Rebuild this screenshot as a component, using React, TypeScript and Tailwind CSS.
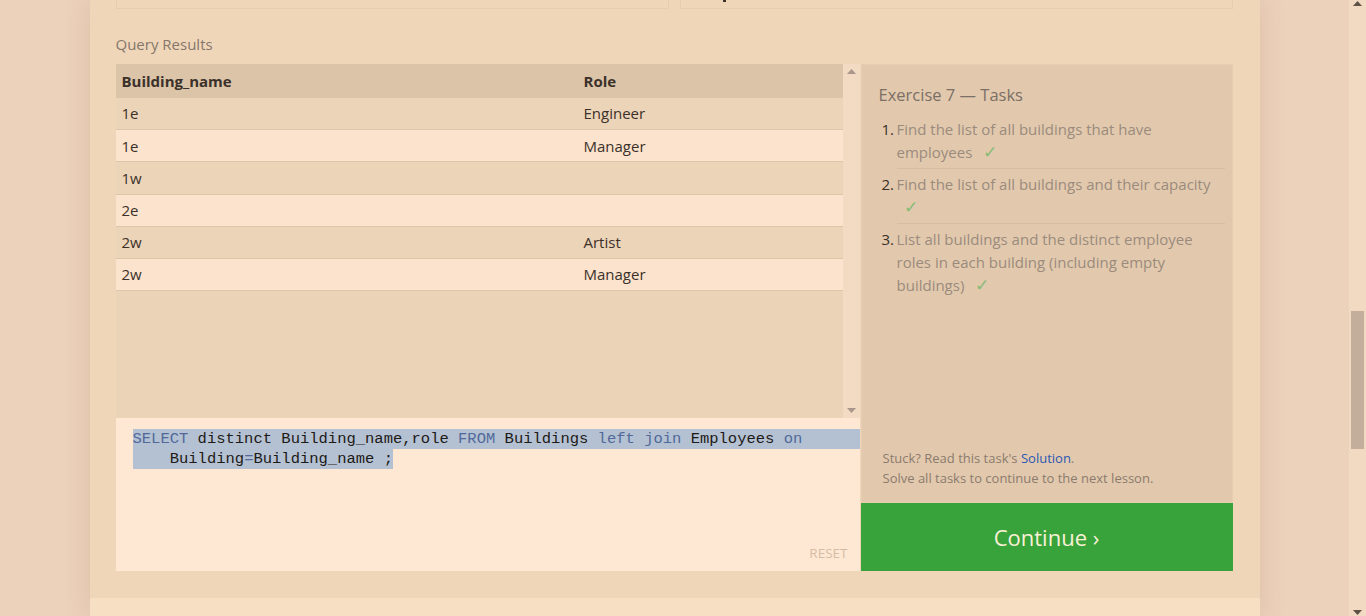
const rows = [
  { b: "1e", r: "Engineer" },
  { b: "1e", r: "Manager" },
  { b: "1w", r: "" },
  { b: "2e", r: "" },
  { b: "2w", r: "Artist" },
  { b: "2w", r: "Manager" },
];

const tasks = [
  "Find the list of all buildings that have employees",
  "Find the list of all buildings and their capacity",
  "List all buildings and the distinct employee roles in each building (including empty buildings)",
];

const sans = { fontFamily: '"Open Sans", "Noto Sans", sans-serif' };

function Check() {
  return <span className="ml-[7px] text-[17px] leading-[20px] text-[#86bb76]">✓</span>;
}

function Arrow({ down = false }: { down?: boolean }) {
  return (
    <svg width="9" height="5" viewBox="0 0 9 5" className={down ? "rotate-180" : ""}>
      <path d="M0 5 L4.5 0 L9 5 Z" fill="currentColor" />
    </svg>
  );
}

function ResultsTable() {
  return (
    <div className="flex h-[354px] bg-[#ebd3b7]">
      <div className="w-[727px]">
        <div className="flex h-[34px] items-center bg-[#dbc4a8] text-[15px] font-bold text-[#3b312a]">
          <div className="w-[468px] pl-[6px]">Building_name</div>
          <div>Role</div>
        </div>
        {rows.map((row, i) => (
          <div
            key={i}
            className={`flex h-[32.2px] items-center border-b border-[#dfc6ab] text-[15px] text-[#3b312a] ${
              i % 2 === 0 ? "bg-[#ecd4b8]" : "bg-[#fbe3cd]"
            }`}
          >
            <div className="w-[468px] pl-[6px]">{row.b}</div>
            <div>{row.r}</div>
          </div>
        ))}
      </div>
      <div className="flex w-[17px] flex-col items-center justify-between bg-[#f2dac3] py-[5px] text-[#a8968a]">
        <Arrow />
        <Arrow down />
      </div>
    </div>
  );
}

function Editor() {
  const kw = "text-[#51699a]";
  return (
    <div className="relative h-[153px] bg-[#ffe8d3] pt-[11px]" style={{ fontFamily: '"Liberation Mono", "DejaVu Sans Mono", monospace' }}>
      <div className="text-[15.5px] leading-[20px] text-[#1e1a16]">
        <div className="ml-[17px] bg-[#b4c1d3] whitespace-pre">
          <span className={kw}>SELECT</span> distinct Building_name,role <span className={kw}>FROM</span> Buildings{" "}
          <span className={kw}>left</span> <span className={kw}>join</span> Employees <span className={kw}>on</span>
        </div>
        <div className="ml-[17px] w-fit bg-[#b4c1d3] whitespace-pre">
          {"    Building"}
          <span className={kw}>=</span>
          {"Building_name ;"}
        </div>
      </div>
      <div className="absolute bottom-[8px] right-[12px] text-[13.5px] text-[#d3bda7]" style={sans}>
        RESET
      </div>
    </div>
  );
}

function TasksPanel() {
  return (
    <div className="flex h-[439px] flex-col border border-[#e7ceb2] bg-[#e2c9ad] pl-[17px] pr-[7px] pt-[18px] pb-[14px]">
      <div className="text-[16.5px] text-[#7b6f66]">Exercise 7 — Tasks</div>
      <ol className="mt-[10px] pl-[3px] text-[15px] leading-[23px] text-[#9b8b7d]">
        {tasks.map((t, i) => (
          <li key={i} className="flex">
            <span className="w-[15px] shrink-0 text-[#3a3028]">{i + 1}.</span>
            <span className={`flex-1 ${i < tasks.length - 1 ? "border-b border-[#d6bea3] pb-[4px] mb-[4px]" : ""}`}>
              {t} <Check />
            </span>
          </li>
        ))}
      </ol>
      <div className="mt-auto pl-[4px] text-[13px] leading-[20px] text-[#8b7b6d]">
        <div>
          Stuck? Read this task's <span className="text-[#2b58b3]">Solution</span>.
        </div>
        <div>Solve all tasks to continue to the next lesson.</div>
      </div>
    </div>
  );
}

export default function App() {
  return (
    <div className="flex h-[616px] w-[1366px] overflow-hidden bg-[#ecd1bb]" style={sans}>
      <div className="flex flex-1 justify-center">
        <div className="flex w-[1170px] flex-col bg-[#f0d6b9] shadow-[0_0_24px_rgba(150,110,70,0.18)]">
          <div className="flex h-[9px] gap-[11px] px-[26px] pr-[27px]">
            <div className="flex-1 border border-t-0 border-[#e6ccb0]"></div>
            <div className="relative flex-1 border border-t-0 border-[#e6ccb0]">
              <span className="absolute left-[42px] top-[0px] h-[2px] w-[3px] bg-[#3b312a]"></span>
            </div>
          </div>
          <div className="px-[26px] pt-[25px] pb-[10px] text-[15px] leading-[20px] text-[#85776b]">Query Results</div>
          <div className="flex px-[26px]">
            <div className="flex w-[744px] flex-col">
              <ResultsTable />
              <Editor />
            </div>
            <div className="ml-[1px] flex w-[372px] flex-col">
              <TasksPanel />
              <div className="flex h-[68px] items-center justify-center bg-[#38a33b] text-[22px] text-[#fbf1d8]">
                Continue ›
              </div>
            </div>
          </div>
          <div className="h-[27px]"></div>
          <div className="flex-1 bg-[#f7dfc4]"></div>
        </div>
      </div>
      <div className="flex w-[17px] flex-col items-center bg-[#f1d9c2]">
        <div className="pt-[1px] text-[#5e5147]">
          <Arrow />
        </div>
        <div className="mt-[305px] h-[138px] w-[13px] bg-[#c3ae9b]"></div>
        <div className="mt-auto pb-[1px] text-[#5e5147]">
          <Arrow down />
        </div>
      </div>
    </div>
  );
}
